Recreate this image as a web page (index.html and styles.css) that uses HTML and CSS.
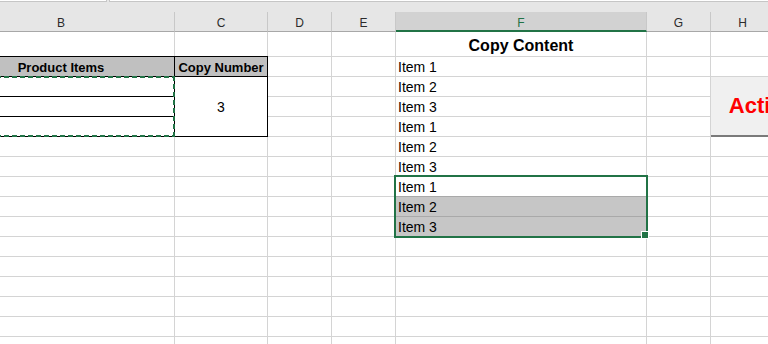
FILE: index.html
```html
<!DOCTYPE html>
<html>
<head>
<meta charset="utf-8">
<link rel="stylesheet" href="styles.css">
</head>
<body>
<div class="app">
  <div class="topbar">
    <div class="strip">
      <div class="namebox"></div>
      <div class="fbar"></div>
    </div>
  </div>
  <div class="colheads">
    <div class="ch">B</div>
    <div class="ch">C</div>
    <div class="ch">D</div>
    <div class="ch">E</div>
    <div class="ch ch-active">F</div>
    <div class="ch">G</div>
    <div class="ch">H</div>
  </div>
  <div class="sheet">
    <div class="cell title f r1">Copy Content</div>

    <div class="cell th b r2">Product Items</div>
    <div class="cell th th-c c r2">Copy Number</div>
    <div class="cell item f r2">Item 1</div>

    <div class="cell tb b r3"></div>
    <div class="cell tb b r4"></div>
    <div class="cell tb b r5"></div>
    <div class="cell num c r3-5">3</div>

    <div class="cell item f r3">Item 2</div>
    <div class="cell item f r4">Item 3</div>
    <div class="cell item f r5">Item 1</div>
    <div class="cell item f r6">Item 2</div>
    <div class="cell item f r7">Item 3</div>
    <div class="cell item active f r8">Item 1</div>
    <div class="cell item shaded f r9">Item 2</div>
    <div class="cell item shaded f r10">Item 3</div>

    <div class="btn h r3-5">Action</div>

    <div class="marquee b r3-5">
      <svg class="ants" width="227" height="61" viewBox="0 0 227 61" shape-rendering="crispEdges">
        <line x1="0" y1="1" x2="227" y2="1"/>
        <line x1="0" y1="60" x2="227" y2="60"/>
        <line x1="226" y1="0" x2="226" y2="61"/>
      </svg>
    </div>
    <div class="selection f r8-10"><span class="handle"></span></div>
  </div>
</div>
</body>
</html>
```
FILE: styles.css
```css
* { box-sizing: border-box; }

html, body {
  margin: 0;
  padding: 0;
  background: #ffffff;
}

body {
  width: 768px;
  height: 344px;
  overflow: hidden;
  font-family: "Liberation Sans", Arial, sans-serif;
  color: #000;
}

.app {
  width: 768px;
  height: 344px;
  overflow: hidden;
}

/* top strip (bottom of name box / formula bar) */
.topbar {
  height: 12px;
  background: #e6e6e6;
}

.strip {
  display: flex;
  gap: 2px;
  height: 2px;
}

.namebox {
  width: 107px;
  background: #fff;
  border-right: 1px solid #c6c6c6;
  border-bottom: 1px solid #c6c6c6;
}

.fbar {
  flex: 1;
  background: #fff;
  border-left: 1px solid #c6c6c6;
  border-bottom: 1px solid #c6c6c6;
}

/* column headers */
.colheads,
.sheet {
  display: grid;
  grid-template-columns: 227px 93px 64px 64px 251px 64px 64px;
  margin-left: -52px;
  width: 827px;
}

.colheads {
  height: 20px;
  background: #e6e6e6;
}

.ch {
  display: flex;
  align-items: center;
  justify-content: center;
  padding-top: 2px;
  font-size: 12px;
  color: #2b2b2b;
  border-right: 1px solid #c8c8c8;
  border-bottom: 1px solid #a8a8a8;
}

.ch-active {
  background: #d2d2d2;
  color: #217346;
  border-bottom: 2px solid #217346;
  padding-top: 3px;
}

/* sheet grid with gridlines */
.sheet {
  grid-template-rows: 25px repeat(15, 20px);
  background-image:
    linear-gradient(#d4d4d4, #d4d4d4),
    linear-gradient(#d4d4d4, #d4d4d4),
    linear-gradient(#d4d4d4, #d4d4d4),
    linear-gradient(#d4d4d4, #d4d4d4),
    linear-gradient(#d4d4d4, #d4d4d4),
    linear-gradient(#d4d4d4, #d4d4d4),
    linear-gradient(#d4d4d4, #d4d4d4),
    repeating-linear-gradient(to bottom, transparent 0 19px, #d4d4d4 19px 20px);
  background-size:
    1px 100%, 1px 100%, 1px 100%, 1px 100%, 1px 100%, 1px 100%, 1px 100%,
    100% 100%;
  background-position:
    226px 0, 319px 0, 383px 0, 447px 0, 698px 0, 762px 0, 826px 0,
    0 5px;
  background-repeat:
    no-repeat, no-repeat, no-repeat, no-repeat, no-repeat, no-repeat, no-repeat,
    repeat-y;
}

/* grid placement */
.b { grid-column: 1; }
.c { grid-column: 2; }
.f { grid-column: 5; }
.h { grid-column: 7; }

.r1 { grid-row: 1; }
.r2 { grid-row: 2; }
.r3 { grid-row: 3; }
.r4 { grid-row: 4; }
.r5 { grid-row: 5; }
.r6 { grid-row: 6; }
.r7 { grid-row: 7; }
.r8 { grid-row: 8; }
.r9 { grid-row: 9; }
.r10 { grid-row: 10; }
.r3-5 { grid-row: 3 / span 3; }
.r8-10 { grid-row: 8 / span 3; }

/* cells */
.cell {
  display: flex;
  align-items: center;
  font-size: 14px;
  white-space: nowrap;
  border-right: 1px solid transparent;
  border-bottom: 1px solid transparent;
  background-clip: padding-box;
}

.title {
  justify-content: center;
  font-weight: bold;
  font-size: 16px;
  padding-top: 3px;
}

.item {
  padding-left: 2px;
}

.th {
  justify-content: center;
  font-weight: bold;
  font-size: 13px;
  padding-top: 1px;
  margin-top: -1px;
  background-color: #c0c0c0;
  border-top: 1px solid #000;
  border-right: 1px solid #000;
  border-bottom: 1px solid #000;
}

.th-c {
  margin-left: -1px;
  border-left: 1px solid #000;
}

.tb {
  border-right: 1px solid #000;
  border-bottom: 1px solid #000;
}

.num {
  justify-content: center;
  margin-left: -1px;
  background: #fff;
  border-left: 1px solid #000;
  border-right: 1px solid #000;
  border-bottom: 1px solid #000;
}

.active {
  border-bottom-color: #a9a9a9;
}

.shaded {
  background-color: #c6c6c6;
  border-bottom-color: #a9a9a9;
}

/* form button */
.btn {
  justify-self: start;
  width: 106px;
  display: flex;
  align-items: center;
  justify-content: center;
  white-space: nowrap;
  background: #f0f0f0;
  border-bottom: 2px solid #7a7a7a;
  border-right: 2px solid #7a7a7a;
  color: #ff0000;
  font-weight: bold;
  font-size: 22px;
  padding-bottom: 1px;
}

/* copy marquee (marching ants) */
.marquee {
  margin-top: -1px;
  overflow: hidden;
}

.ants {
  display: block;
}

.ants line {
  stroke: #217346;
  stroke-width: 2;
  stroke-dasharray: 5 3;
}

/* selection rectangle */
.selection {
  position: relative;
  margin: -2px -1px -1px -2px;
  border: 2px solid #217346;
}

.handle {
  position: absolute;
  right: -3px;
  bottom: -3px;
  width: 8px;
  height: 8px;
  background: #217346;
  border: 1px solid #fff;
}
```
